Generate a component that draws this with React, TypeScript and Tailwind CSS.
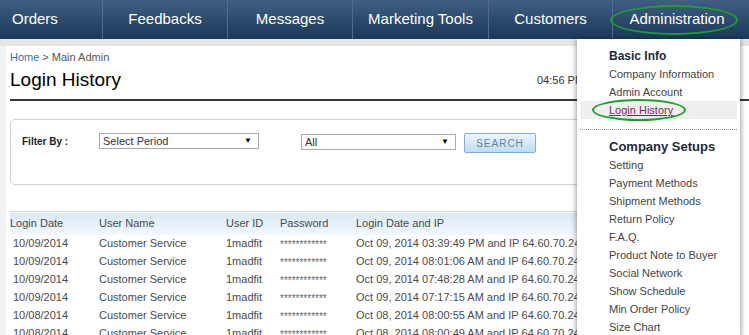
import React from "react";

const NAV = [
  { label: "Orders", w: "w-[102px]", align: "justify-start pl-3" },
  { label: "Feedbacks", w: "w-[125px]", align: "justify-center" },
  { label: "Messages", w: "w-[125px]", align: "justify-center" },
  { label: "Marketing Tools", w: "w-[136px]", align: "justify-center" },
  { label: "Customers", w: "w-[124px]", align: "justify-center" },
  { label: "Administration", w: "flex-1", align: "justify-center pr-2" },
];

const ROWS = [
  ["10/09/2014", "Oct 09, 2014 03:39:49 PM"],
  ["10/09/2014", "Oct 09, 2014 08:01:06 AM"],
  ["10/09/2014", "Oct 09, 2014 07:48:28 AM"],
  ["10/09/2014", "Oct 09, 2014 07:17:15 AM"],
  ["10/08/2014", "Oct 08, 2014 08:00:55 AM"],
  ["10/08/2014", "Oct 08, 2014 08:00:49 AM"],
];

const SETUPS = [
  "Setting",
  "Payment Methods",
  "Shipment Methods",
  "Return Policy",
  "F.A.Q.",
  "Product Note to Buyer",
  "Social Network",
  "Show Schedule",
  "Min Order Policy",
  "Size Chart",
];

function Select({ label, width }: { label: string; width: string }) {
  return (
    <div
      className={`${width} flex h-[16px] items-center justify-between border border-[#a9a9a9] bg-white pl-[3px] pr-[6px] text-[11px] text-[#333]`}
    >
      <span>{label}</span>
      <span className="text-[8px] text-black">▼</span>
    </div>
  );
}

export default function App() {
  return (
    <div
      className="relative h-[335px] w-[749px] overflow-hidden bg-[#f1f1f1]"
      style={{ fontFamily: '"Liberation Sans", Arial, sans-serif' }}
    >
      <nav className="flex h-[39px] bg-linear-to-b from-[#3f5f82] to-[#1b3858]">
        {NAV.map((item, i) => (
          <div
            key={item.label}
            className={`${item.w} ${item.align} flex items-center text-[15px] text-white ${
              i > 0 ? "border-l border-[#4e6d8f]" : ""
            }`}
          >
            {item.label}
          </div>
        ))}
      </nav>
      <div className="h-[7px] bg-[#e6e6e6]" />

      <main className="ml-[6px] h-[289px] bg-white pl-[4px]">
        <div className="flex h-[22px] items-center text-[11px] text-[#555]">
          <span className="text-[#3b6ea5]">Home</span>
          <span className="mx-[3px]">&gt;</span>
          <span>Main Admin</span>
        </div>
        <div className="relative flex h-[22px] items-center">
          <h1 className="text-[19px] leading-none text-black">Login History</h1>
          <span className="absolute left-[527px] top-[4px] text-[11px] text-[#333]">
            04:56 PM
          </span>
        </div>
        <div className="mt-[9px] h-[2px] bg-[#383838]" />

        <section className="mt-[18px] flex h-[66px] w-[720px] items-start rounded-[5px] border border-[#d2d2d2] pt-[13px]">
          <span className="ml-[11px] mt-[1px] w-[77px] text-[10px] font-bold text-[#222]">
            Filter By :
          </span>
          <Select label="Select Period" width="w-[160px]" />
          <div className="ml-[42px] mt-[1px]">
            <Select label="All" width="w-[155px]" />
          </div>
          <button
            type="button"
            className="ml-[8px] flex h-[20px] w-[72px] items-center justify-center rounded-[2px] border border-[#86acd0] bg-linear-to-b from-[#eef6fd] to-[#bcdcf4] text-[10px] tracking-[1px] text-[#5a7fa8]"
          >
            SEARCH
          </button>
        </section>

        <table className="mt-[26px] w-[720px] table-fixed border-collapse text-[11px] text-[#4a4a4a]">
          <colgroup>
            <col className="w-[89px]" />
            <col className="w-[127px]" />
            <col className="w-[54px]" />
            <col className="w-[76px]" />
            <col />
          </colgroup>
          <thead>
            <tr className="h-[23px] border-t border-[#c5dcee] bg-linear-to-b from-[#d9e9f6] to-[#f3f8fc] text-left">
              <th className="font-normal">Login Date</th>
              <th className="font-normal">User Name</th>
              <th className="font-normal">User ID</th>
              <th className="font-normal">Password</th>
              <th className="font-normal">Login Date and IP</th>
            </tr>
          </thead>
          <tbody>
            {ROWS.map(([date, when], i) => (
              <tr key={i} className="h-[18px]">
                <td className="pl-[3px]">{date}</td>
                <td>Customer Service</td>
                <td>1madfit</td>
                <td className="align-top pt-[2px] text-[10px] text-[#666]">************</td>
                <td className="whitespace-nowrap">
                  {when} and IP 64.60.70.24
                </td>
              </tr>
            ))}
          </tbody>
        </table>
      </main>

      <div className="absolute left-[577px] top-[39px] h-[300px] w-[163px] bg-white pt-[8px] shadow-[0_1px_6px_rgba(0,0,0,0.5)]">
        <div className="pl-[32px] text-[12px] font-bold leading-[18px] text-[#1e2a3a]">
          Basic Info
        </div>
        <div className="pl-[32px] text-[11px] leading-[18px] text-[#444]">
          Company Information
        </div>
        <div className="pl-[32px] text-[11px] leading-[18px] text-[#444]">
          Admin Account
        </div>
        <div className="mx-[3px] bg-[#efefef] pl-[29px] text-[11px] leading-[18px] text-[#8a1f4f] underline">
          Login History
        </div>
        <div className="mx-[3px] mt-[10px] border-t border-dotted border-[#999]" />
        <div className="pl-[32px] pt-[7px] text-[13px] font-bold leading-[19px] text-[#1e2a3a]">
          Company Setups
        </div>
        {SETUPS.map((s) => (
          <div key={s} className="pl-[32px] text-[11px] leading-[18px] text-[#444]">
            {s}
          </div>
        ))}
      </div>

      <div className="pointer-events-none absolute left-[610px] top-[5px] h-[30px] w-[128px] rounded-[50%] border-2 border-[#1f9e2f]" />
      <div className="pointer-events-none absolute left-[592px] top-[99px] h-[22px] w-[94px] rounded-[50%] border-2 border-[#1f9e2f]" />
    </div>
  );
}
